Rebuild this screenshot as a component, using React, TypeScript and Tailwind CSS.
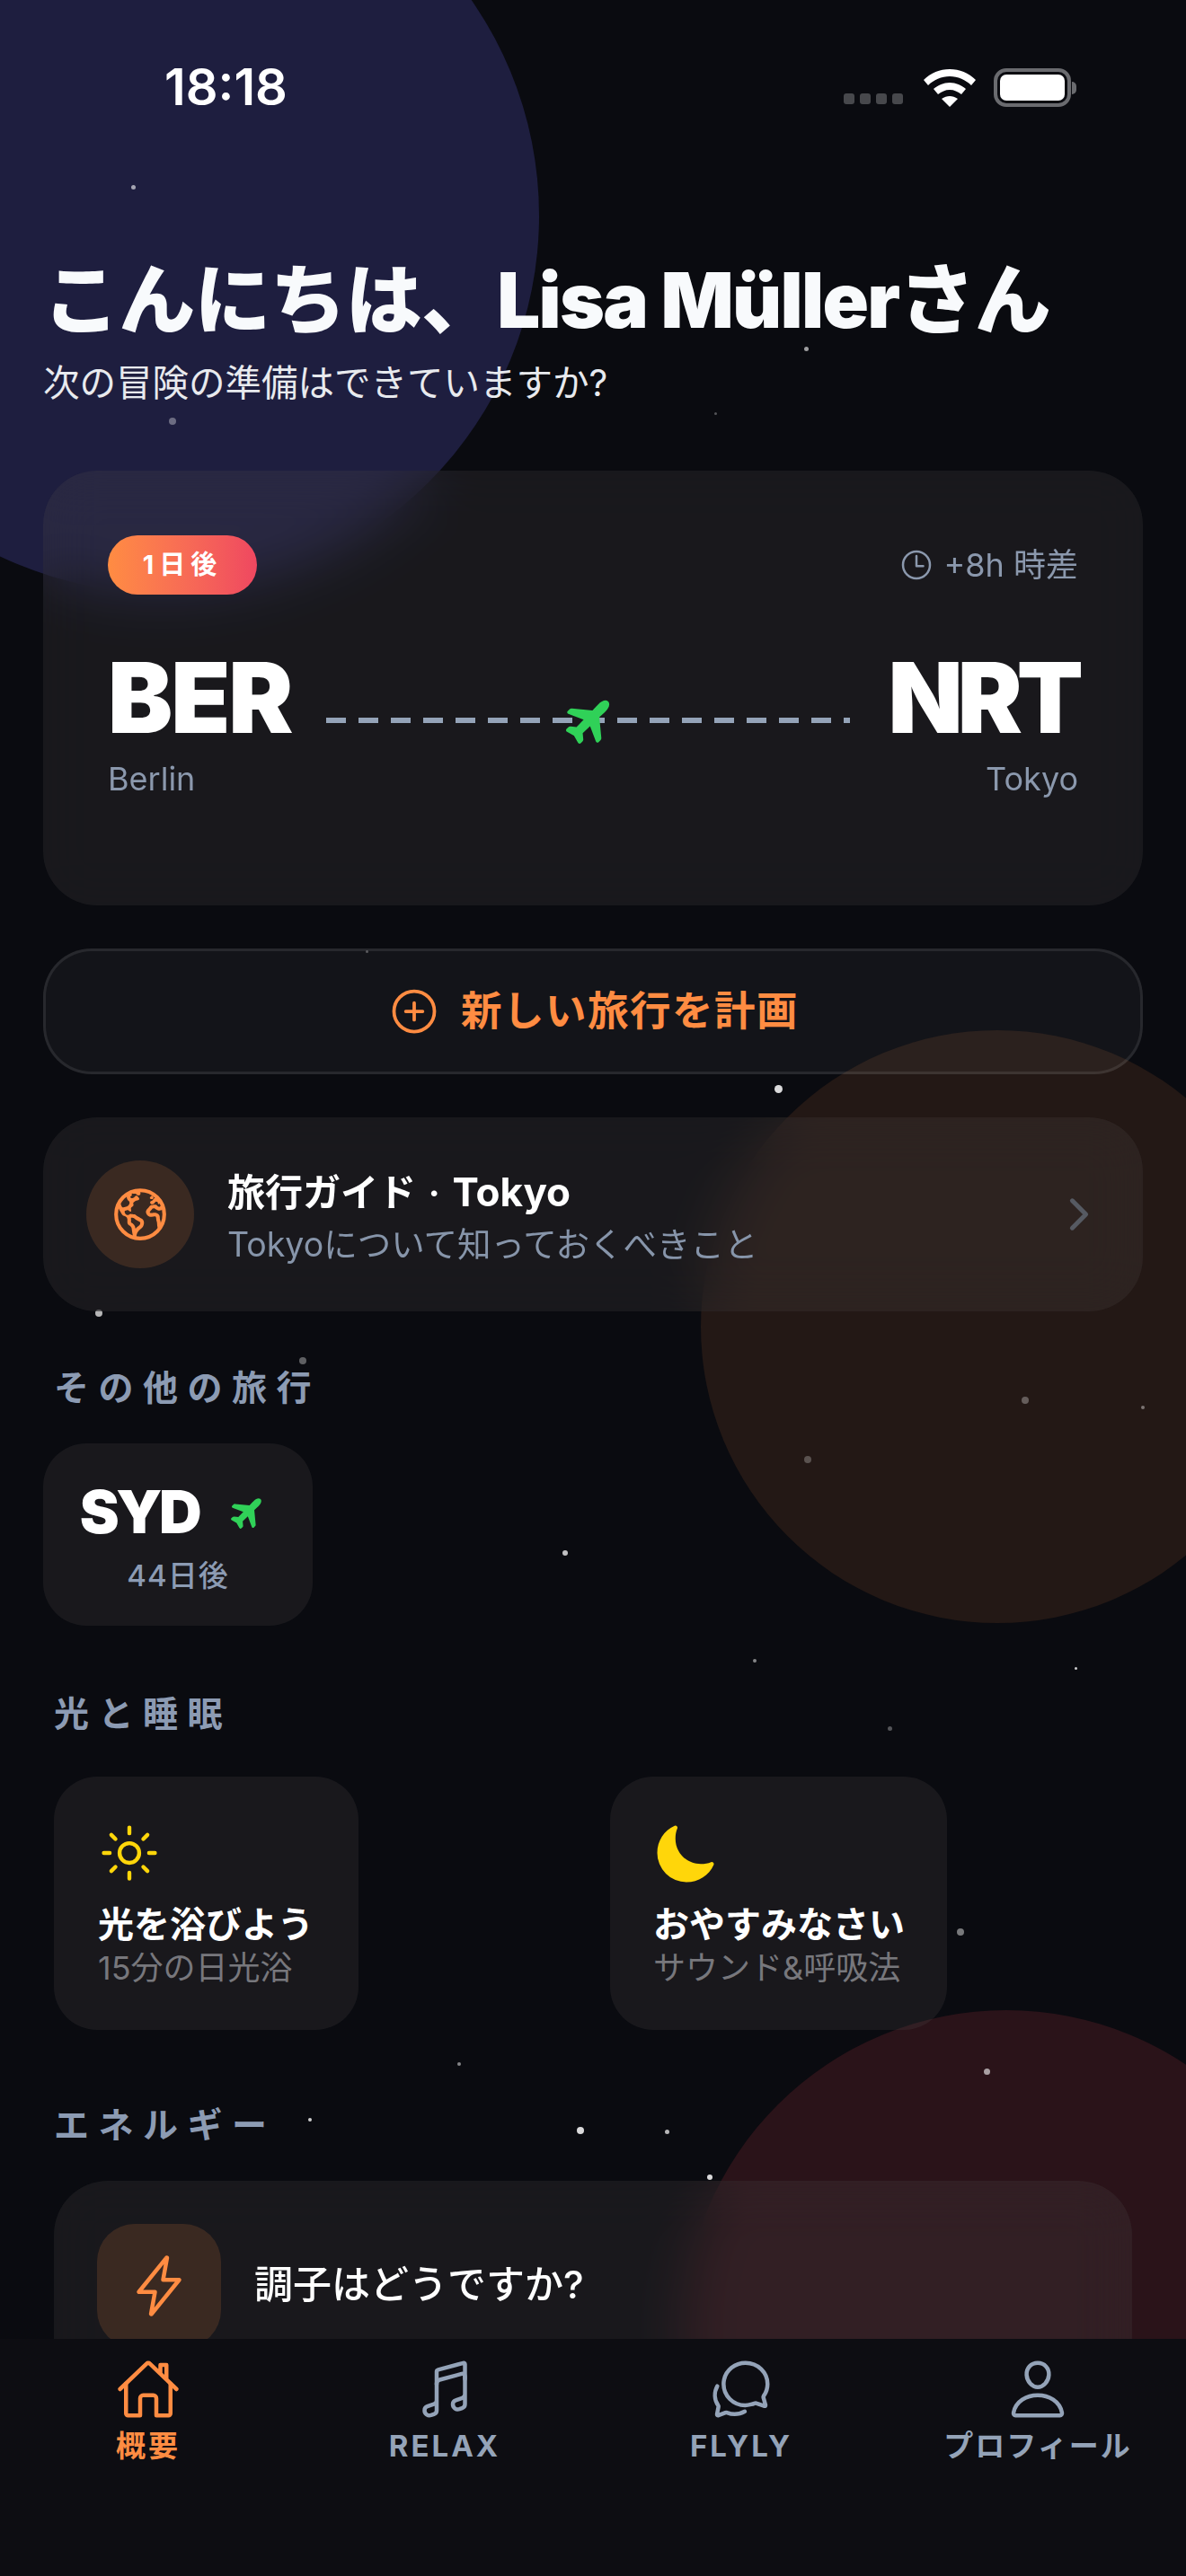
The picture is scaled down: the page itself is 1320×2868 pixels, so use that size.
import React from "react";
import {
  IoAddCircleOutline,
  IoAirplane,
  IoChatbubblesOutline,
  IoChevronForward,
  IoEarthOutline,
  IoFlashOutline,
  IoHomeOutline,
  IoMoon,
  IoMusicalNotesOutline,
  IoPersonOutline,
  IoSunnyOutline,
  IoTimeOutline,
} from "react-icons/io5";

const stars = [
  { x: 148, y: 208, d: 5, o: 0.6 },
  { x: 192, y: 469, d: 8, o: 0.35 },
  { x: 897, y: 388, d: 5, o: 0.6 },
  { x: 796, y: 460, d: 3, o: 0.3 },
  { x: 408, y: 1059, d: 3, o: 0.3 },
  { x: 866, y: 1212, d: 9, o: 0.85 },
  { x: 110, y: 1462, d: 8, o: 0.7 },
  { x: 337, y: 1515, d: 8, o: 0.35 },
  { x: 1141, y: 1559, d: 8, o: 0.3 },
  { x: 1272, y: 1567, d: 4, o: 0.4 },
  { x: 899, y: 1625, d: 8, o: 0.25 },
  { x: 629, y: 1729, d: 6, o: 0.75 },
  { x: 840, y: 1849, d: 4, o: 0.5 },
  { x: 1197, y: 1857, d: 3, o: 0.8 },
  { x: 990, y: 1924, d: 5, o: 0.3 },
  { x: 1069, y: 2151, d: 8, o: 0.45 },
  { x: 511, y: 2298, d: 4, o: 0.5 },
  { x: 1098, y: 2306, d: 7, o: 0.6 },
  { x: 345, y: 2360, d: 4, o: 0.8 },
  { x: 646, y: 2372, d: 8, o: 0.85 },
  { x: 742, y: 2373, d: 5, o: 0.7 },
  { x: 790, y: 2424, d: 6, o: 0.85 },
];

function Background() {
  return (
    <>
      <div className="absolute left-[-240px] top-[-180px] h-[840px] w-[840px] rounded-full bg-[#1e1e3f]" />
      <div className="absolute left-[780px] top-[1147px] h-[660px] w-[660px] rounded-full bg-[#231815]" />
      <div className="absolute left-[760px] top-[2238px] h-[720px] w-[720px] rounded-full bg-[#2a1319]" />
      {stars.map((s) => (
        <div
          key={`${s.x}-${s.y}`}
          className="absolute rounded-full bg-white"
          style={{ left: s.x - s.d / 2, top: s.y - s.d / 2, width: s.d, height: s.d, opacity: s.o }}
        />
      ))}
    </>
  );
}

function StatusBar() {
  return (
    <div className="flex h-[285px] items-start justify-between pl-[183px] pr-[122px] pt-[62px]">
      <span className="text-[56px] font-semibold leading-[70px] text-white">18:18</span>
      <div className="flex items-end pt-[14px]">
        <div className="mb-[3px] flex gap-[6px]">
          <div className="h-[12px] w-[12px] rounded-[3px] bg-[#47484c]" />
          <div className="h-[12px] w-[12px] rounded-[3px] bg-[#47484c]" />
          <div className="h-[12px] w-[12px] rounded-[3px] bg-[#47484c]" />
          <div className="h-[12px] w-[12px] rounded-[3px] bg-[#47484c]" />
        </div>
        <svg viewBox="0 0 58 42" className="ml-[23px] h-[42px] w-[58px]" fill="white">
          <path d="M29 0c11 0 21 4 29 12l-5 6C47 12 38 8 29 8S11 12 5 18l-5-6C8 4 18 0 29 0z" />
          <path d="M29 15c7 0 13 3 18 7l-5 6c-4-3-8-5-13-5s-9 2-13 5l-5-6c5-4 11-7 18-7z" />
          <path d="M29 30c3 0 6 1 9 3l-9 9-9-9c3-2 6-3 9-3z" />
        </svg>
        <div className="ml-[20px] flex items-center">
          <div className="h-[43px] w-[86px] rounded-[14px] border-[4px] border-[#6a6b6f] p-[3px]">
            <div className="h-full w-full rounded-[7px] bg-white" />
          </div>
          <div className="ml-[1px] h-[14px] w-[5px] rounded-r-full bg-[#6a6b6f]" />
        </div>
      </div>
    </div>
  );
}

function Plane({ className }: { className: string }) {
  return <IoAirplane className={`-rotate-45 text-[#30d158] ${className}`} />;
}

function HeroCard() {
  return (
    <div className="mx-[48px] mt-[69px] h-[484px] rounded-[60px] bg-[#555252]/20 px-[72px] pt-[72px] backdrop-blur-[30px]">
      <div className="flex items-center justify-between">
        <div className="flex h-[66px] w-[166px] items-center justify-center rounded-full bg-gradient-to-r from-[#ff8c42] to-[#ef4760] text-[29px] font-bold tracking-[6px] text-white">
          1日後
        </div>
        <div className="flex items-center gap-[10px] text-[36px] text-[#8b98ad]">
          <IoTimeOutline className="h-[40px] w-[40px]" />
          <span>+8h 時差</span>
        </div>
      </div>
      <div className="mt-[50px] flex">
        <div>
          <div className="text-[108px] font-black leading-[130px] tracking-[-2px] text-white">BER</div>
          <div className="mt-[3px] text-[36px] leading-[44px] text-[#8b98ad]">Berlin</div>
        </div>
        <div className="relative ml-[39px] mr-[43px] mt-[87px] h-[6px] flex-1 bg-[repeating-linear-gradient(90deg,#94a3b8_0,#94a3b8_22px,transparent_22px,transparent_36px)]">
          <div className="absolute left-[264px] top-[-28px] flex h-[60px] w-[60px] items-center justify-center">
            <Plane className="h-[60px] w-[60px]" />
          </div>
        </div>
        <div className="text-right">
          <div className="text-[108px] font-black leading-[130px] tracking-[-6px] text-white">NRT</div>
          <div className="mt-[3px] text-[36px] leading-[44px] text-[#8b98ad]">Tokyo</div>
        </div>
      </div>
    </div>
  );
}

function SectionLabel({ children, className }: { children: React.ReactNode; className: string }) {
  return (
    <div className={`px-[60px] text-[39px] font-semibold leading-[50px] tracking-[10.5px] text-[#8c9bb3] ${className}`}>
      {children}
    </div>
  );
}

export default function App() {
  return (
    <div className="relative h-[2868px] w-[1320px] overflow-hidden bg-[#0a0b10] font-[Inter,'Noto_Sans_CJK_JP',sans-serif]">
      <Background />

      <div className="relative">
        <StatusBar />

        <div className="px-[48px]">
          <h1 className="whitespace-nowrap text-[85px] font-black leading-[100px] tracking-[-0.8px] text-[#f8fafc]">
            こんにちは、<span className="tracking-[-1.7px]">Lisa Müller</span>さん
          </h1>
          <p className="mt-[14px] text-[40.5px] leading-[56px] text-[#e8eaee]">次の冒険の準備はできていますか?</p>
        </div>

        <HeroCard />

        <button className="mx-[48px] mt-[48px] flex h-[140px] w-[1224px] items-center justify-center gap-[22px] rounded-[54px] border-[3px] border-white/[0.085] bg-white/[0.04] text-[45.5px] font-semibold tracking-[1.5px] text-[#ff8c42]">
          <IoAddCircleOutline className="h-[60px] w-[60px]" />
          新しい旅行を計画
        </button>

        <div className="mx-[48px] mt-[48px] flex h-[216px] items-center rounded-[60px] bg-[#555252]/20 pl-[48px] pr-[44px] backdrop-blur-[30px]">
          <div className="flex h-[120px] w-[120px] items-center justify-center rounded-full bg-[#ff8c42]/15">
            <IoEarthOutline className="h-[66px] w-[66px] text-[#ff8c42]" />
          </div>
          <div className="ml-[37px] flex-1 pt-[6px]">
            <div className="text-[42px] font-semibold leading-[56px] text-white">
              旅行ガイド <span className="mx-[3px]">·</span> <span className="text-[44px] font-bold">Tokyo</span>
            </div>
            <div className="mt-[5px] text-[37.5px] leading-[50px] text-[#8795aa]">Tokyoについて知っておくべきこと</div>
          </div>
          <IoChevronForward className="h-[54px] w-[54px] text-[#565a62]" />
        </div>

        <SectionLabel className="mt-[60px]">その他の旅行</SectionLabel>

        <div className="ml-[48px] mt-[37px] flex h-[203px] w-[300px] flex-col items-center rounded-[48px] bg-[#555252]/20 pt-[36px]">
          <div className="mr-[10px] flex items-center gap-[34px]">
            <span className="text-[66px] font-black leading-[80px] tracking-[-3.5px] text-white">SYD</span>
            <Plane className="h-[42px] w-[42px]" />
          </div>
          <div className="mt-[9px] text-[33px] font-medium leading-[44px] tracking-[1px] text-[#8c9bb3]">44日後</div>
        </div>

        <SectionLabel className="mt-[73px]">光と睡眠</SectionLabel>

        <div className="mt-[45px] grid grid-cols-2 justify-items-start gap-[38px] px-[60px]">
          <div className="flex h-[282px] flex-col rounded-[48px] bg-[#555252]/20 pl-[49px] pr-[50px] pt-[50px]">
            <IoSunnyOutline className="h-[70px] w-[70px] text-[#ffd60a]" />
            <div className="mt-[19px] text-[40px] font-semibold leading-[52px] text-white">光を浴びよう</div>
            <div className="text-[36px] leading-[44px] text-[#77777c]">15分の日光浴</div>
          </div>
          <div className="flex h-[282px] flex-col rounded-[48px] bg-[#555252]/20 pl-[48px] pr-[47px] pt-[50px]">
            <IoMoon className="h-[72px] w-[72px] text-[#ffd60a]" />
            <div className="mt-[17px] text-[40px] font-semibold leading-[52px] text-white">おやすみなさい</div>
            <div className="text-[36px] leading-[44px] text-[#77777c]">サウンド&amp;呼吸法</div>
          </div>
        </div>

        <SectionLabel className="mt-[81px]">エネルギー</SectionLabel>

        <div className="mx-[60px] mt-[37px] flex h-[300px] items-start rounded-[60px] bg-[#555252]/20 pl-[48px] pt-[48px] backdrop-blur-[30px]">
          <div className="flex h-[138px] w-[138px] items-center justify-center rounded-[42px] bg-[#ff8c42]/15">
            <IoFlashOutline className="h-[72px] w-[72px] text-[#ff8c42]" />
          </div>
          <div className="ml-[37px] text-[43px] font-medium leading-[134px] text-white">調子はどうですか?</div>
        </div>
      </div>

      <nav className="absolute inset-x-0 bottom-0 grid h-[264px] grid-cols-4 bg-[#0d0d12] pt-[20px]">
        <div className="flex flex-col items-center text-[#ff8c42]">
          <IoHomeOutline className="h-[72px] w-[72px]" />
          <span className="mt-[5px] text-[33px] font-bold leading-[44px] tracking-[3px]">概要</span>
        </div>
        <div className="flex flex-col items-center text-[#94a3b8]">
          <IoMusicalNotesOutline className="h-[72px] w-[72px]" />
          <span className="mt-[5px] text-[33px] font-bold leading-[44px] tracking-[3px]">RELAX</span>
        </div>
        <div className="flex flex-col items-center text-[#94a3b8]">
          <IoChatbubblesOutline className="h-[72px] w-[72px]" />
          <span className="mt-[5px] text-[33px] font-bold leading-[44px] tracking-[3px]">FLYLY</span>
        </div>
        <div className="flex flex-col items-center text-[#94a3b8]">
          <IoPersonOutline className="h-[72px] w-[72px]" />
          <span className="mt-[5px] text-[33px] font-bold leading-[44px] tracking-[2px]">プロフィール</span>
        </div>
      </nav>
    </div>
  );
}
